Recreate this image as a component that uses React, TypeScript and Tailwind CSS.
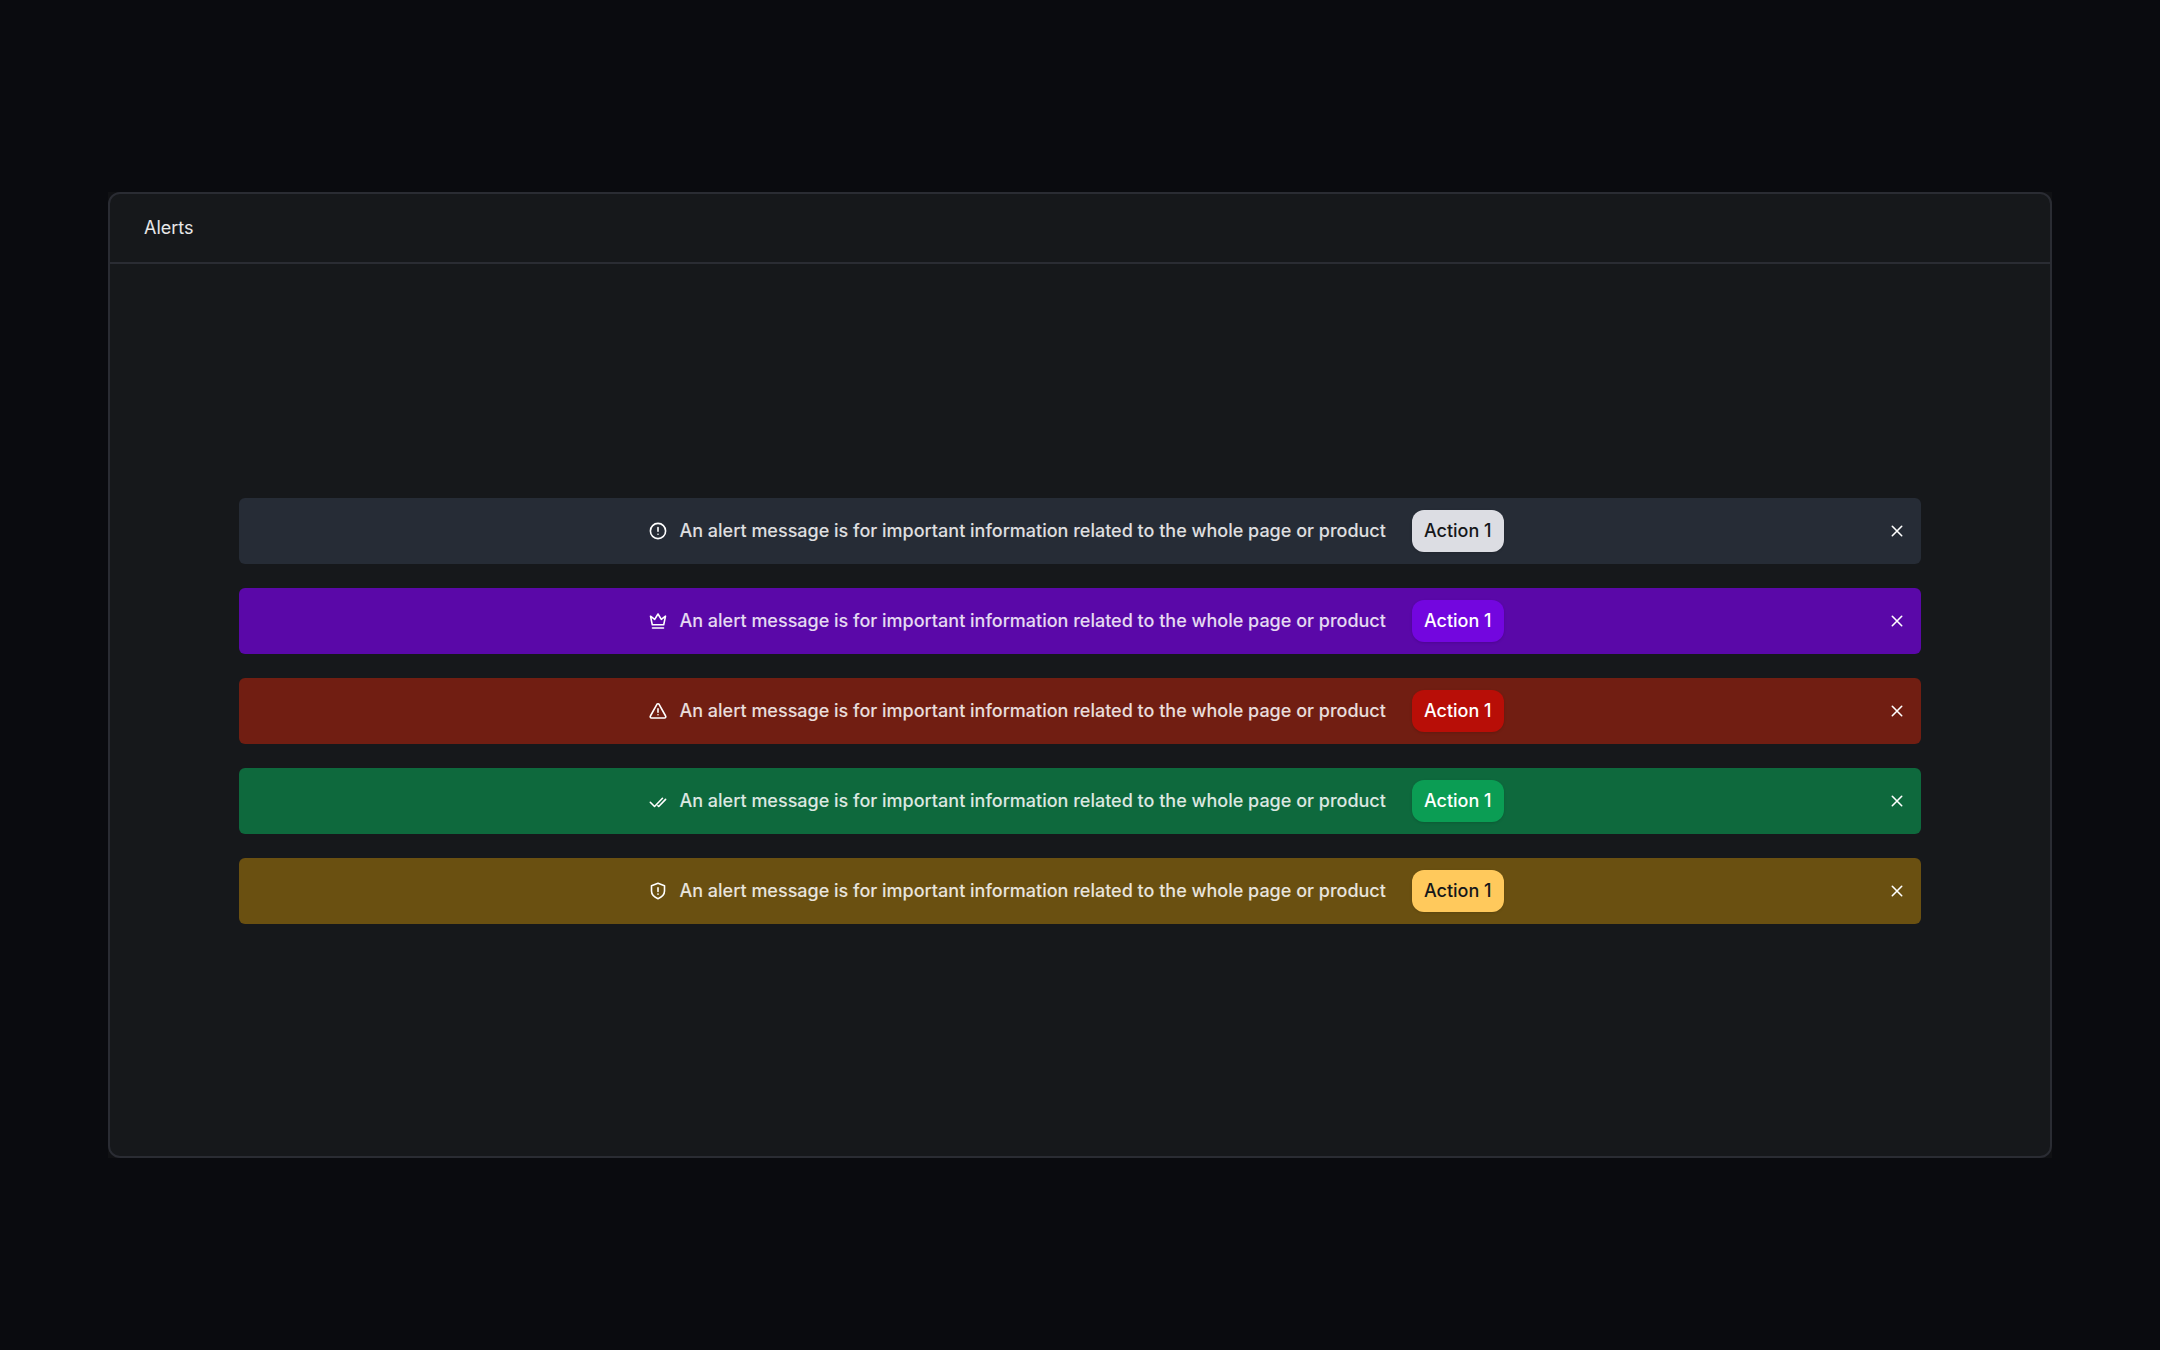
import type { ReactNode } from "react";

function Icon({ children }: { children: ReactNode }) {
  return (
    <svg
      className="size-5 shrink-0 text-white"
      viewBox="0 0 20 20"
      fill="none"
      stroke="currentColor"
      strokeWidth="1.6"
      strokeLinecap="round"
      strokeLinejoin="round"
      aria-hidden="true"
    >
      {children}
    </svg>
  );
}

const InfoIcon = () => (
  <Icon>
    <circle cx="10" cy="10" r="7.6" />
    <path d="M10 6.6v3.6M10 13.2v.1" />
  </Icon>
);

const CrownIcon = () => (
  <Icon>
    <path d="M4.3 13.8 2.5 5.2l4.2 3.2L10 3l3.3 5.4 4.2-3.2L15.7 13.8ZM4.5 17h11" />
  </Icon>
);

const WarningIcon = () => (
  <Icon>
    <path d="M8.9 3.3 2.4 15a1.3 1.3 0 0 0 1.1 2h13a1.3 1.3 0 0 0 1.1-2L11.1 3.3a1.3 1.3 0 0 0-2.2 0Z" />
    <path d="M10 7.7v3.6M10 13.7v.1" />
  </Icon>
);

const ChecksIcon = () => (
  <Icon>
    <path d="m2.3 11.3 4.2 4.2 8-8.2M10.7 15.5l6.9-7.1M9.9 14.7l.8.8" />
  </Icon>
);

const ShieldIcon = () => (
  <Icon>
    <path d="m10 2.3 6.5 2.4v5.4c0 3.6-2.7 6-6.5 7.6-3.8-1.6-6.5-4-6.5-7.6V4.7Z" />
    <path d="M10 6.8v3.6M10 13.1v.1" />
  </Icon>
);

const CloseIcon = () => (
  <Icon>
    <path d="m5.3 5.3 9.4 9.4M14.7 5.3l-9.4 9.4" />
  </Icon>
);

const alerts = [
  { id: "neutral", icon: <InfoIcon />, bar: "bg-[#262c36]", button: "bg-[#dcdde3] text-[#16171a]" },
  { id: "premium", icon: <CrownIcon />, bar: "bg-[#5a08a8]", button: "bg-[#7306df] text-white" },
  { id: "danger", icon: <WarningIcon />, bar: "bg-[#711e12]", button: "bg-[#b80e07] text-white" },
  { id: "success", icon: <ChecksIcon />, bar: "bg-[#0e693d]", button: "bg-[#0b9d54] text-white" },
  { id: "caution", icon: <ShieldIcon />, bar: "bg-[#6a5011]", button: "bg-[#ffc95c] text-[#16171a]" },
];

export default function App() {
  return (
    <main className="flex min-h-screen bg-[#0a0b0f] px-[5%] py-48 font-['Inter',sans-serif] text-lg text-white/85">
      <div className="flex grow bg-[#101114]">
        <section className="flex grow flex-col rounded-xl border-2 border-[#2a2c33] bg-[#16181b]">
          <header className="border-b-2 border-[#2a2c33] px-[34px] py-5">
            <h1 className="leading-7 text-white/90">Alerts</h1>
          </header>
          <div className="flex grow flex-col justify-center gap-6 px-[129px] pt-[2px] font-medium">
            {alerts.map((alert) => (
              <div
                key={alert.id}
                role="alert"
                className={`flex items-center rounded-md py-3 pr-[14px] pl-[26px] ${alert.bar}`}
              >
                <div className="flex grow items-center justify-center gap-[26px]">
                  <div className="flex items-center gap-[11px]">
                    {alert.icon}
                    <p>An alert message is for important information related to the whole page or product</p>
                  </div>
                  <button
                    type="button"
                    className={`rounded-xl px-3 py-[7px] shadow-sm ${alert.button}`}
                  >
                    Action 1
                  </button>
                </div>
                <button type="button" aria-label="Dismiss alert">
                  <CloseIcon />
                </button>
              </div>
            ))}
          </div>
        </section>
      </div>
    </main>
  );
}
